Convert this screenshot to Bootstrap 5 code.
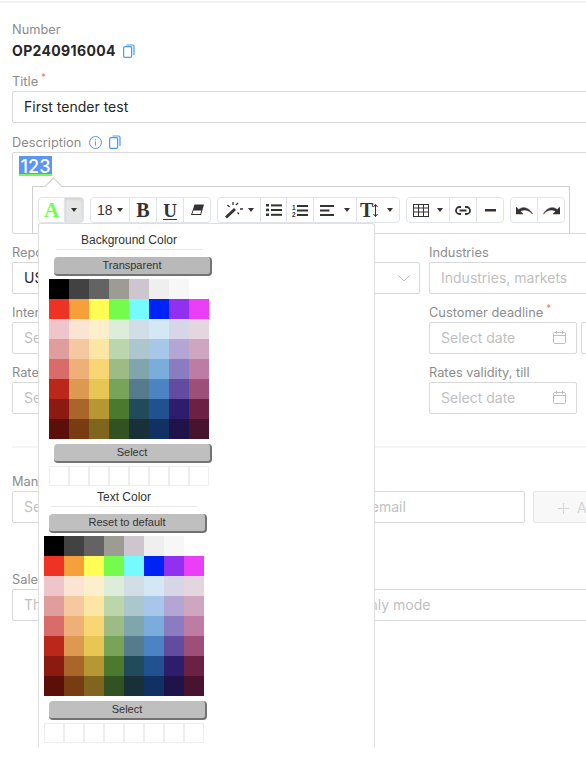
<!DOCTYPE html>
<html lang="en">
<head>
    <meta charset="UTF-8">
    <meta name="viewport" content="width=device-width, initial-scale=1.0">
    <title>Tender form</title>
    <link href="https://cdn.jsdelivr.net/npm/bootstrap@5.3.0/dist/css/bootstrap.min.css" rel="stylesheet">
    <style>
        html, body { height: 100%; overflow: hidden; }
        body { background: #fff; font-family: Inter, "Liberation Sans", sans-serif; font-size: 14px; color: #262626; }
        .top-line { height: 3px; border-bottom: 2px solid #f2f2f2; }
        .sheet { width: 700px; padding: 16px 0 0 12px; }
        .field-label { display: block; height: 20px; line-height: 22px; margin: 0; color: #8c8c8c; font-size: 12.8px; white-space: nowrap; }
        .req { color: #ff7a59; font-size: 10px; line-height: 0; vertical-align: 5px; margin-left: 3px; }
        .number-value { height: 22px; line-height: 24px; margin-bottom: 10px; font-weight: 700; font-size: 14px; letter-spacing: .35px; color: #262626; }
        .blue-ico { color: #4a9bf5; vertical-align: -2px; }
        .field-input.form-control, .field-input.form-select { height: 32px; min-height: 32px; padding: 0 11px 1px; border: 1px solid #d9d9d9; border-radius: 2px; font-size: 14px; color: #262626; box-shadow: none; background-color: #fff; }
        .field-input::placeholder { color: #bfbfbf; opacity: 1; }
        .field-input.form-select { background-image: none; }
        .long-input { width: 600px; }
        .row-field { margin-bottom: 8px; }
        .col-left { width: 408px; flex: none; }
        .col-left-short { width: 340px; }
        .col-date { width: 148px; flex: none; }
        .col-rest { width: 200px; flex: none; }
        .input-wrap { position: relative; }
        .input-ico { position: absolute; right: 11px; top: 9px; color: #bfbfbf; }
        .editor { position: relative; height: 82px; width: 600px; margin-bottom: 8px; border: 1px solid #d9d9d9; border-radius: 2px; }
        .sel-text { position: absolute; left: 6px; top: 3px; width: 33px; height: 20px; line-height: 21px; text-align: center; font-size: 18px; font-weight: 500; color: #fff; background: #5b95f5; border-bottom: 2px solid #75fb4c; }
        .note-pop { position: absolute; left: 19px; top: 33px; width: 538px; height: 48px; background: #fff; border: 1px solid #cfcfcf; border-bottom-color: #d9d9d9; padding: 10px 0 0 5px; }
        .note-arrow { position: absolute; left: 14px; top: -7px; width: 13px; height: 13px; background: #fff; border-left: 1px solid #cfcfcf; border-top: 1px solid #cfcfcf; transform: rotate(45deg); }
        .tb-btn.btn { height: 26px; padding: 0; display: flex; align-items: center; justify-content: center; flex: none; color: #333; background: #fff; border: 1px solid #e1e5e9; border-radius: 4px; font-family: "Liberation Serif", serif; font-weight: 700; font-size: 20px; line-height: 1; }
        .tb-btn.wide { justify-content: space-between; padding: 0 6px; }
        .tb-btn.pressed { background: #e6e6e6; box-shadow: inset 0 1px 3px rgba(0,0,0,.12); }
        .tb-btn.plain-num { font-family: "Liberation Sans", sans-serif; font-weight: 400; font-size: 14px; }
        .w-20 { width: 20px; } .w-27 { width: 27px; } .w-28 { width: 28px; } .w-40 { width: 40px; } .w-44 { width: 44px; }
        .tri { display: inline-block; width: 0; height: 0; border-top: 4px solid #333; border-left: 3.5px solid transparent; border-right: 3.5px solid transparent; }
        .under-u { text-decoration: underline; text-decoration-thickness: 1px; text-underline-offset: 2px; font-size: 19px; }
        .color-menu { position: absolute; z-index: 5; left: 0; top: 26px; width: 337px; height: 524px; background: #fff; border: 1px solid #dedede; border-bottom: 0; border-radius: 3px 3px 0 0; font-family: "Liberation Sans", sans-serif; font-size: 12px; color: #333; }
        .pal { position: absolute; width: 170px; }
        .pal-a { left: 10px; top: 8px; }
        .pal-b { left: 5px; top: 265px; }
        .pal-title { position: relative; left: 7px; width: 146px; height: 18px; line-height: 17px; text-align: center; border-bottom: 1px solid #e8e8e8; }
        .pal-btn.btn { display: block; margin: 7px 0 3px 5px; width: 158px; height: 19px; padding: 0; font-size: 11px; line-height: 17px; color: #333; background: #bfbfbf; border: 0; border-right: 2px solid #737373; border-bottom: 2px solid #737373; border-radius: 4px; }
        .pal-btn.top-btn { background: #b9b9b9; }
        .pal-btn.under-grid { margin-top: 5px; }
        .swatches { display: grid; grid-template-columns: repeat(8, 20px); width: 160px; }
        .swatch { height: 20px; }
        .recent { display: grid; grid-template-columns: repeat(8, 20px); width: 160px; height: 20px; }
        .recent span { border: 1px solid #eeeeee; }
        .split { height: 2px; margin: 32px 0 23px; width: 600px; background: #f5f5f5; }
        .add-btn.btn { width: 120px; height: 32px; padding: 0 0 0 24px; margin-left: 8px; color: #bfbfbf; background: #f5f5f5; border: 1px solid #d9d9d9; border-radius: 2px; font-family: Inter, sans-serif; font-size: 14px; text-align: left; }
        .mgr-input { width: 513px; flex: none; }
        .mgr-row { margin-bottom: 46px; }
        .group-gap { gap: 6px; position: relative; }
        .blank-date { margin-left: -5px; }
    </style>
</head>
<body>
    <div class="top-line"></div>
    <div class="sheet">
        <label class="field-label">Number</label>
        <div class="number-value">OP240916004
            <svg class="blue-ico ms-1" width="12" height="14" viewBox="0 0 12 14" fill="none" stroke="currentColor" stroke-width="1.2"><rect x=".6" y="2.6" width="8" height="10.8" rx="1.4"/><path d="M3.500 1h6a1.500 1.500 0 0 1 1.500 1.500V11"/><path d="M8.600 2.600V12" stroke-width="1"/></svg>
        </div>

        <div style="margin-bottom:9px">
            <label class="field-label">Title<span class="req">*</span></label>
            <input class="form-control field-input long-input" value="First tender test">
        </div>

        <label class="field-label">Description
            <svg class="blue-ico ms-1" width="13" height="13" viewBox="0 0 13 13" fill="none" stroke="currentColor" stroke-width="1"><circle cx="6.500" cy="6.500" r="6"/><path d="M6.500 5.400v4.200M6.500 3.200v1.100"/></svg>
            <svg class="blue-ico ms-1" width="12" height="14" viewBox="0 0 12 14" fill="none" stroke="currentColor" stroke-width="1.2"><rect x=".6" y="2.6" width="8" height="10.8" rx="1.4"/><path d="M3.500 1h6a1.500 1.500 0 0 1 1.500 1.500V11"/><path d="M8.600 2.600V12" stroke-width="1"/></svg>
        </label>
        <div class="editor">
            <span class="sel-text">123</span>
            <div class="note-pop">
                <div class="note-arrow"></div>
                <div class="d-flex group-gap">
                    <div class="btn-group">
                        <button class="btn tb-btn w-27" style="color:#75fb4c;font-size:21px">A</button>
                        <button class="btn tb-btn w-20 pressed"><span class="tri"></span></button>
                    </div>
                    <div class="btn-group">
                        <button class="btn tb-btn wide plain-num w-40">18<span class="tri"></span></button>
                        <button class="btn tb-btn w-28">B</button>
                        <button class="btn tb-btn w-28"><span class="under-u">U</span></button>
                        <button class="btn tb-btn w-28">
                            <svg width="15" height="12" viewBox="0 0 15 12"><path d="M4.600.5H14L11 11H1z" fill="#333"/><path d="M3.300 6.500h8l-1 3.400H2.400z" fill="#fff"/></svg>
                        </button>
                    </div>
                    <div class="btn-group">
                        <button class="btn tb-btn wide w-44">
                            <svg width="19" height="18" viewBox="0 0 19 18" fill="#333"><path d="M1 15.500 10 7l2 2-9 8.500z"/><path d="M9 1v3M16 8h3M3.500 4l2 2M14 2l-2 2M15 13l-1.500-1.500" stroke="#333" stroke-width="1.300"/></svg>
                            <span class="tri"></span>
                        </button>
                        <button class="btn tb-btn w-27">
                            <svg width="16" height="12" viewBox="0 0 16 12" fill="#333"><rect x="0" y="0" width="3" height="2.500"/><rect x="0" y="4.700" width="3" height="2.500"/><rect x="0" y="9.500" width="3" height="2.500"/><rect x="5" y=".4" width="11" height="2"/><rect x="5" y="5" width="11" height="2"/><rect x="5" y="9.800" width="11" height="2"/></svg>
                        </button>
                        <button class="btn tb-btn w-28">
                            <svg width="16" height="13" viewBox="0 0 16 13" fill="#333"><text x="0" y="6" font-family="Liberation Sans" font-size="6.500" font-weight="700">1</text><text x="0" y="13" font-family="Liberation Sans" font-size="6.500" font-weight="700">2</text><rect x="5" y="1" width="11" height="2"/><rect x="5" y="5.500" width="11" height="2"/><rect x="5" y="10" width="11" height="2"/></svg>
                        </button>
                        <button class="btn tb-btn wide w-44">
                            <svg width="14" height="11" viewBox="0 0 14 11" fill="#333"><rect width="14" height="2"/><rect y="4.500" width="9.500" height="2"/><rect y="9" width="14" height="2"/></svg>
                            <span class="tri"></span>
                        </button>
                        <button class="btn tb-btn wide w-44" style="padding-left:3px">
                            <span class="d-flex align-items-center">T<svg width="5" height="13" viewBox="0 0 5 13" fill="none" stroke="#333" stroke-width="1"><path d="M2.500 .5v12M.5 3l2-2.500 2 2.500M.5 10l2 2.500 2-2.500"/></svg></span>
                            <span class="tri"></span>
                        </button>
                    </div>
                    <div class="btn-group">
                        <button class="btn tb-btn wide w-44">
                            <svg width="16" height="13" viewBox="0 0 16 13" fill="none" stroke="#333" stroke-width="1"><rect x=".5" y=".5" width="15" height="12"/><path d="M.5 4h15M.5 8h15M5.500 .5v12M10.500 .5v12"/></svg>
                            <span class="tri"></span>
                        </button>
                        <button class="btn tb-btn w-28">
                            <svg width="16" height="9" viewBox="0 0 16 9" fill="none" stroke="#333" stroke-width="1.800"><path d="M6 1H4.500a3.500 3.500 0 0 0 0 7H6M10 1h1.500a3.500 3.500 0 0 1 0 7H10M4.500 4.500h7"/></svg>
                        </button>
                        <button class="btn tb-btn w-28">
                            <svg width="11" height="3" viewBox="0 0 11 3" fill="#333"><rect width="11" height="2.500"/></svg>
                        </button>
                    </div>
                    <div class="btn-group">
                        <button class="btn tb-btn w-28">
                            <svg width="17" height="9" viewBox="0 0 17 9"><path d="M0 1v7h7L4.500 5.500C7 3.500 12 3 16.500 8 14 2.500 7.500-.5 2.800 3.500z" fill="#333" stroke="#333" stroke-width=".5"/></svg>
                        </button>
                        <button class="btn tb-btn w-28">
                            <svg width="17" height="9" viewBox="0 0 17 9"><path d="M17 1v7h-7l2.500-2.500C10 3.500 5 3 .5 8 3 2.500 9.500-.5 14.200 3.500z" fill="#333" stroke="#333" stroke-width=".5"/></svg>
                        </button>
                    </div>

                    <div class="color-menu">
                        <div class="pal pal-a">
                            <div class="pal-title">Background Color</div>
                            <button class="btn pal-btn top-btn">Transparent</button>
                            <div class="swatches" data-palette></div>
                            <button class="btn pal-btn under-grid">Select</button>
                            <div class="recent"><span></span><span></span><span></span><span></span><span></span><span></span><span></span><span></span></div>
                        </div>
                        <div class="pal pal-b">
                            <div class="pal-title">Text Color</div>
                            <button class="btn pal-btn">Reset to default</button>
                            <div class="swatches" data-palette></div>
                            <button class="btn pal-btn under-grid">Select</button>
                            <div class="recent"><span></span><span></span><span></span><span></span><span></span><span></span><span></span><span></span></div>
                        </div>
                    </div>
                </div>
            </div>
        </div>

        <div class="d-flex row-field" style="gap:9px">
            <div class="col-left">
                <label class="field-label">Report currency</label>
                <div class="input-wrap">
                    <select class="form-select field-input"><option>USD</option></select>
                    <svg class="input-ico" width="12" height="7" style="top:13px;right:10px" viewBox="0 0 12 7" fill="none" stroke="currentColor"><path d="M.5.5 6 6l5.500-5.500"/></svg>
                </div>
            </div>
            <div class="col-rest">
                <label class="field-label">Industries</label>
                <input class="form-control field-input" placeholder="Industries, markets">
            </div>
        </div>

        <div class="d-flex row-field" style="gap:9px">
            <div class="col-left">
                <label class="field-label">Internal deadline</label>
                <input class="form-control field-input col-left-short" placeholder="Select date">
            </div>
            <div class="col-date">
                <label class="field-label">Customer deadline<span class="req">*</span></label>
                <div class="input-wrap">
                    <input class="form-control field-input" placeholder="Select date">
                    <svg class="input-ico" width="13" height="13" viewBox="0 0 13 13" fill="none" stroke="currentColor"><rect x=".5" y="1.500" width="12" height="11" rx="1"/><path d="M.5 4.500h12M3.500 0v3M9.500 0v3"/></svg>
                </div>
            </div>
            <div class="col-date blank-date">
                <label class="field-label">&nbsp;</label>
                <input class="form-control field-input">
            </div>
        </div>

        <div class="d-flex row-field" style="gap:9px">
            <div class="col-left">
                <label class="field-label">Rates validity, from</label>
                <input class="form-control field-input col-left-short" placeholder="Select date">
            </div>
            <div class="col-date">
                <label class="field-label">Rates validity, till</label>
                <div class="input-wrap">
                    <input class="form-control field-input" placeholder="Select date">
                    <svg class="input-ico" width="13" height="13" viewBox="0 0 13 13" fill="none" stroke="currentColor"><rect x=".5" y="1.500" width="12" height="11" rx="1"/><path d="M.5 4.500h12M3.500 0v3M9.500 0v3"/></svg>
                </div>
            </div>
        </div>

        <div class="split"></div>

        <div class="mgr-row">
            <label class="field-label">Manager</label>
            <div class="d-flex">
                <input class="form-control field-input mgr-input" placeholder="Select a manager from the company list, or enter an email">
                <button class="btn add-btn" disabled>
                    <svg width="11" height="11" viewBox="0 0 11 11" fill="none" stroke="currentColor" class="me-2"><path d="M5.500 0v11M0 5.500h11"/></svg>Add
                </button>
            </div>
        </div>

        <label class="field-label">Sales manager</label>
        <input class="form-control field-input long-input" placeholder="The field is filled automatically and is given in read only mode">
    </div>

    <script>
        // same table for both pickers
        const palette = [
            '#000000','#424242','#636363','#9c9c94','#cec6ce','#efefef','#f7f7f7','#ffffff',
            '#ee3325','#f5a03a','#fffd54','#75fb4c','#75fbfd','#0023f5','#9130f0','#ea3ff7',
            '#eec5cb','#fbe5d2','#fdefcb','#dcedd9','#d2dee6','#d4e7f5','#d7d6e7','#e4d6de',
            '#df9e9c','#f6c8a0','#fbe7a3','#bdd5ab','#acc6ce','#a6c6ea','#b3a6d4','#cfa6bf',
            '#d96c69','#eeb077','#f8d673','#9dbb85','#7fa5ad','#7aaddb','#8b7cc2','#bd7ca3',
            '#bb271a','#dd9950','#e8c655','#78a45a','#557b8c','#4b83c3','#624ca0','#9c4f78',
            '#8c1a11','#a9652a','#b79634','#4b7a2f','#214b5a','#21528f','#2e1c6d','#6b2143',
            '#5c0e08','#773c11','#80651f','#315221','#183139','#103162','#20134a','#47132f'
        ];
        document.querySelectorAll('[data-palette]').forEach(function(box) {
            palette.forEach(function(c) {
                const cell = document.createElement('div');
                cell.className = 'swatch';
                cell.style.backgroundColor = c;
                box.appendChild(cell);
            });
        });
    </script>
    <script src="https://cdn.jsdelivr.net/npm/bootstrap@5.3.0/dist/js/bootstrap.bundle.min.js"></script>
</body>
</html>
